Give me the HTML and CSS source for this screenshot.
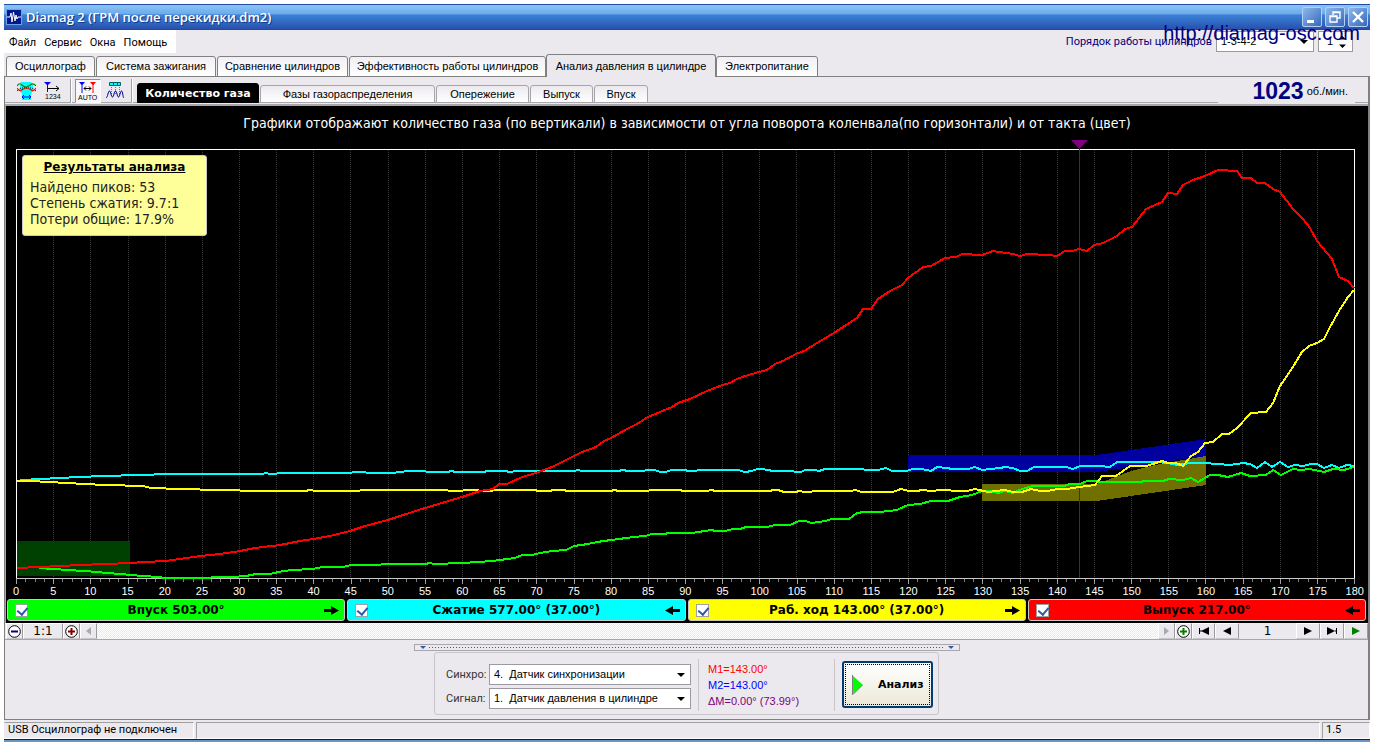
FILE: index.html
```html
<!DOCTYPE html>
<html lang="ru">
<head>
<meta charset="utf-8">
<title>Diamag 2</title>
<link rel="stylesheet" href="styles.css">
</head>
<body>
<div class="window">
  <header class="titlebar">
    <svg class="app-icon" width="16" height="16" viewBox="0 0 16 16"><rect width="16" height="16" fill="#001a8c"/><rect x=".5" y=".5" width="15" height="15" fill="none" stroke="#6fa0e8"/><path d="M1 8h3l1-4 1 9 1.500-10 1.500 9 1-6 1 4 1-2h3" fill="none" stroke="#fff" stroke-width="1"/></svg>
    <h1 class="title">Diamag 2 (ГРМ после перекидки.dm2)</h1>
    <div class="window-buttons">
      <button class="winbtn" aria-label="Свернуть"><svg width="18" height="18" viewBox="0 0 18 18"><path d="M4 12h7v3H4z" fill="#fff"/></svg></button>
      <button class="winbtn" aria-label="Восстановить"><svg width="18" height="18" viewBox="0 0 18 18"><path d="M7 7V4h7v6h-3M7 4.500h7" fill="none" stroke="#fff" stroke-width="1.400"/><path d="M4 8h7v6H4zM4 8.500h7" fill="none" stroke="#fff" stroke-width="1.400"/></svg></button>
      <button class="winbtn" aria-label="Закрыть"><svg width="18" height="18" viewBox="0 0 18 18"><path d="M4 4l10 10M14 4L4 14" stroke="#fff" stroke-width="2.400"/></svg></button>
    </div>
  </header>

  <div class="menu-row">
    <nav class="menu"><button>Файл</button><button>Сервис</button><button>Окна</button><button>Помощь</button></nav>
    <div class="order">
      <label for="order">Порядок работы цилиндров</label>
      <span class="combo order-combo"><select id="order"><option>1-3-4-2</option></select></span>
      <span class="spin"><input type="text" value="1" aria-label="Цилиндр"><svg width="7" height="12" viewBox="0 0 7 12"><path d="M0 3.500L3.500 0 7 3.500zM0 8.500h7L3.500 12z"/></svg></span>
    </div>
    <a class="site" href="#">http://diamag-osc.com</a>
  </div>

  <nav class="tabs">
    <button class="tab t1">Осциллограф</button>
    <button class="tab t2">Система зажигания</button>
    <button class="tab t3">Сравнение цилиндров</button>
    <button class="tab t4">Эффективность работы цилиндров</button>
    <button class="tab t5 active">Анализ давления в цилиндре</button>
    <button class="tab t6">Электропитание</button>
  </nav>

  <main class="page">
    <div class="toolbar">
      <button class="tool" aria-label="Фазы"><svg width="19" height="18" viewBox="0 0 19 18"><path d="M4 0h10l2 3v6l-2 3v6H5v-6L3 9V3z" fill="#0ff"/><path d="M0 4c4-6 5 2 9.500 1S15-1 19 4" fill="none" stroke="#008000" stroke-width="1.200"/><path d="M0 9l4-3h11l4 3" fill="none" stroke="#000" stroke-dasharray="1 1"/><path d="M0 6c4 6 5 0 9.500 0S15 12 19 6" fill="none" stroke="red" stroke-width="1.200"/><path d="M5 15h9M7 13l-2 2 2 2M12 13l2 2-2 2" fill="none" stroke="#00f"/></svg></button>
      <button class="tool" aria-label="Нумерация"><svg width="20" height="18" viewBox="0 0 20 18"><path d="M0 0h7L4 3v7H3V3z" fill="#00f"/><path d="M4 6.500h11M12 4l3 2.500L12 9" fill="none" stroke="#000"/><text x="1" y="17" class="tiny">1234</text></svg></button>
      <i class="sep"></i>
      <button class="tool pressed" aria-label="Авто"><svg width="22" height="20" viewBox="0 0 22 20"><path d="M2 1h6L5.500 4v8h-1V4z" fill="#00f"/><path d="M13 1h6l-2.500 3v8h-1V4z" fill="red"/><path d="M7 7.500h7M9 5.500l-2 2 2 2M12 5.500l2 2-2 2" fill="none" stroke="#000"/><text x="1" y="19" class="tiny">AUTO</text></svg></button>
      <button class="tool" aria-label="Пики"><svg width="18" height="18" viewBox="0 0 18 18"><path d="M3.500.5h11v3h-11zM7.500 0v4M11.500 0v4" fill="#0ff" stroke="#006060"/><path d="M5.500 5v8M9.500 5v8M13.500 5v8" stroke="#777" stroke-dasharray="1 1"/><path d="M0 16c2-1 2-7 3.500-7s1.500 6 3 6 1.500-6 3-6 1.500 6 3 6 1.500-6 3-6 1 6 2.500 7" fill="none" stroke="#00008b"/></svg></button>
      <i class="sep sep-end"></i>
      <nav class="subtabs">
        <button class="sub s1 active">Количество газа</button>
        <button class="sub s2">Фазы газораспределения</button>
        <button class="sub s3">Опережение</button>
        <button class="sub s4">Выпуск</button>
        <button class="sub s5">Впуск</button>
      </nav>
      <div class="rpm"><strong>1023</strong><span>об./мин.</span></div>
    </div>

    <section class="chart">
      <p class="caption">Графики отображают количество газа (по вертикали) в зависимости от угла поворота коленвала(по горизонтали) и от такта (цвет)</p>
      <div class="plot">
        <svg class="curves" viewBox="16 140 1339 444" preserveAspectRatio="none">
          <path d="M1071 140h17l-8.500 9z" fill="#800080"/>
          <path class="grid" d="M53.500 150v428M90.500 150v428M128.500 150v428M165.500 150v428M202.500 150v428M239.500 150v428M276.500 150v428M313.500 150v428M350.500 150v428M388.500 150v428M425.500 150v428M462.500 150v428M499.500 150v428M536.500 150v428M574.500 150v428M611.500 150v428M648.500 150v428M685.500 150v428M722.500 150v428M759.500 150v428M796.500 150v428M834.500 150v428M871.500 150v428M908.500 150v428M945.500 150v428M982.500 150v428M1020.500 150v428M1057.500 150v428M1094.500 150v428M1131.500 150v428M1168.500 150v428M1205.500 150v428M1242.500 150v428M1280.500 150v428M1317.500 150v428"/>
          <g shape-rendering="crispEdges">
            <rect x="17" y="541" width="113" height="35" fill="#004000"/>
            <path d="M908 455h189l109-16v17l-109 16H908z" fill="#0000a0"/>
            <path d="M982 484h115l34-13 24-6 51-9v29l-109 16H982z" fill="#707000"/>
            <path d="M16 149.500h1339M16.500 149v430M1354.500 149v430" fill="none" stroke="#fff"/>
            <path d="M16 578.500h1339" stroke="#c8c8c8"/>
            <path d="M16 580.500h1339" stroke="#808080" stroke-width="3" stroke-dasharray="1 8.292"/>
            <path d="M16 581.500h1339" stroke="#a0a0a0" stroke-width="5" stroke-dasharray="1 36.167"/>
            <path d="M1079.500 149v429" stroke="#800080"/>
          </g>
          <g class="series">
            <polyline stroke="#0ff" points="17,481 24,480 39,479 62,478 76,477 106,476 136,475 173,474 262,474 266,473 270,474 285,473 351,473 353,472 365,472 367,473 395,473 397,472 411,471 425,471 427,472 448,472 451,471 456,472 484,472 487,471 506,471 509,472 517,471 574,471 578,470 582,471 618,471 623,470 628,471 644,471 646,470 655,470 660,472 666,472 671,470 685,470 688,471 696,471 698,470 738,470 745,472 752,471 757,469 763,469 767,470 774,471 792,471 796,472 801,472 805,470 815,470 819,471 825,469 862,469 866,470 878,470 886,468 892,471 906,471 913,469 922,469 931,471 937,467 946,468 953,469 968,469 975,467 982,470 1000,468 1005,467 1013,468 1020,471 1027,471 1034,467 1066,467 1073,469 1080,466 1100,466 1110,467 1117,462 1155,462 1168,463 1177,465 1190,463 1205,463 1230,465 1243,463 1250,464 1257,468 1265,462 1272,467 1280,462 1288,467 1295,465 1303,466 1311,464 1317,464 1324,468 1332,465 1339,468 1347,465 1354,466"/>
            <polyline stroke="#0f0" points="39,568 53,569 68,570 83,571 98,572 106,573 121,574 130,575 143,576 158,577 165,578 210,578 212,577 233,577 246,576 256,574 270,574 283,571 293,570 312,569 323,567 343,567 351,565 380,565 382,564 425,564 430,563 434,564 447,564 449,563 462,563 478,562 492,561 515,558 522,555 532,555 540,553 552,551 566,550 574,546 588,544 597,542 611,540 634,537 645,536 652,534 665,534 668,533 692,533 711,530 716,531 725,531 733,529 740,529 746,527 767,527 775,525 790,525 799,521 805,521 812,523 825,521 832,519 849,519 857,513 864,512 880,512 897,510 908,505 920,504 931,501 948,501 960,497 972,495 982,491 990,491 998,493 1005,491 1013,493 1022,489 1033,486 1064,486 1070,484 1080,484 1087,481 1095,481 1100,482 1141,482 1144,481 1163,481 1169,479 1183,480 1191,478 1198,482 1210,475 1218,475 1228,477 1241,473 1250,476 1266,475 1273,470 1281,475 1293,469 1301,470 1310,469 1324,472 1333,469 1344,470 1354,467"/>
            <polyline stroke="#ff0" points="17,481 32,481 47,482 68,483 83,484 106,485 143,486 151,488 181,489 218,490 262,491 305,491 310,490 316,491 358,491 362,490 447,490 449,491 462,491 464,490 477,490 480,491 492,491 494,490 535,490 538,491 550,491 553,490 564,490 567,491 611,491 614,490 619,491 648,491 650,490 680,490 683,491 707,491 711,490 716,491 770,491 773,490 778,490 784,492 796,492 799,491 805,492 820,491 851,491 855,490 862,492 893,492 901,489 909,491 916,491 923,490 931,491 942,490 960,491 967,491 975,489 988,492 996,491 1005,490 1013,492 1022,492 1031,489 1040,491 1048,491 1057,489 1067,489 1079,487 1095,485 1102,476 1116,476 1130,466 1146,466 1153,464 1162,461 1168,463 1176,463 1183,466 1191,456 1198,452 1205,443 1213,442 1222,434 1229,434 1237,428 1251,413 1266,412 1273,403 1280,386 1291,370 1302,352 1309,346 1317,343 1324,339 1330,327 1339,311 1348,297 1354,290"/>
            <polyline stroke="red" points="17,568 39,567 62,566 78,565 106,564 130,563 145,562 165,561 180,559 200,556 220,554 240,551 255,548 280,545 300,541 313,539 330,536 350,531 365,526 388,520 400,516 425,508 462,497 480,491 493,489 499,484 507,484 522,477 536,473 552,467 574,456 582,452 596,447 604,441 611,438 627,429 637,424 648,417 672,407 678,403 690,399 707,391 715,388 722,385 730,383 737,379 745,376 759,372 767,370 775,364 783,361 796,354 804,351 817,343 834,333 843,327 857,318 863,309 871,309 878,299 890,291 902,285 908,278 923,267 931,266 945,258 956,257 962,254 982,255 993,251 1013,254 1020,256 1027,254 1048,255 1057,256 1065,251 1072,251 1079,249 1087,251 1094,245 1103,243 1117,236 1125,229 1132,227 1146,209 1162,202 1168,193 1177,194 1183,185 1193,180 1205,176 1218,170 1237,171 1242,178 1251,178 1257,183 1265,183 1273,189 1280,192 1293,209 1303,219 1310,228 1317,241 1332,259 1339,277 1348,281 1354,288"/>
          </g>
        </svg>
        <aside class="results">
          <h2>Результаты анализа</h2>
          <p>Найдено пиков: 53</p>
          <p>Степень сжатия: 9.7:1</p>
          <p>Потери общие: 17.9%</p>
        </aside>
      </div>
      <div class="axis"><span>0</span><span>5</span><span>10</span><span>15</span><span>20</span><span>25</span><span>30</span><span>35</span><span>40</span><span>45</span><span>50</span><span>55</span><span>60</span><span>65</span><span>70</span><span>75</span><span>80</span><span>85</span><span>90</span><span>95</span><span>100</span><span>105</span><span>110</span><span>115</span><span>120</span><span>125</span><span>130</span><span>135</span><span>140</span><span>145</span><span>150</span><span>155</span><span>160</span><span>165</span><span>170</span><span>175</span><span>180</span></div>
      <div class="legend">
        <label class="stroke-item green"><input type="checkbox" checked><span>Впуск 503.00°</span><svg width="15" height="9" viewBox="0 0 15 9"><path d="M0 3h7V0l8 4.500L7 9V6H0z"/></svg></label>
        <label class="stroke-item cyan"><input type="checkbox" checked><span>Сжатие 577.00° (37.00°)</span><svg width="15" height="9" viewBox="0 0 15 9"><path d="M15 3H8V0L0 4.500 8 9V6h7z"/></svg></label>
        <label class="stroke-item yellow"><input type="checkbox" checked><span>Раб. ход 143.00° (37.00°)</span><svg width="15" height="9" viewBox="0 0 15 9"><path d="M0 3h7V0l8 4.500L7 9V6H0z"/></svg></label>
        <label class="stroke-item red"><input type="checkbox" checked><span>Выпуск 217.00°</span><svg width="15" height="9" viewBox="0 0 15 9"><path d="M15 3H8V0L0 4.500 8 9V6h7z"/></svg></label>
      </div>
    </section>

    <div class="scroller">
      <button class="sb w17" aria-label="Уменьшить"><svg width="13" height="13" viewBox="0 0 13 13"><circle cx="6.500" cy="6.500" r="5.800" fill="#fff" stroke="#000"/><path d="M3 6.500h7" stroke="#000080" stroke-width="2"/></svg></button>
      <button class="sb w39">1:1</button>
      <button class="sb w17" aria-label="Увеличить"><svg width="13" height="13" viewBox="0 0 13 13"><circle cx="6.500" cy="6.500" r="5.800" fill="#fff" stroke="#000"/><path d="M3 6.500h7M6.500 3v7" stroke="#800000" stroke-width="2"/></svg></button>
      <button class="sb w17" aria-label="Влево"><svg width="5" height="8" viewBox="0 0 5 8"><path d="M5 0v8L0 4z" fill="#aaa"/></svg></button>
      <div class="track"></div>
      <button class="sb w17" aria-label="Вправо"><svg width="5" height="8" viewBox="0 0 5 8"><path d="M0 0v8l5-4z" fill="#aaa"/></svg></button>
      <button class="sb w17" aria-label="Добавить"><svg width="13" height="13" viewBox="0 0 13 13"><circle cx="6.500" cy="6.500" r="5.800" fill="#fff" stroke="#000"/><path d="M3 6.500h7M6.500 3v7" stroke="#008000" stroke-width="2"/></svg></button>
      <button class="sb w23" aria-label="В начало"><svg width="10" height="8" viewBox="0 0 10 8"><path d="M0 1h1v6H0zM1 3.500h2v1H1zM10 0v8L2 4z"/></svg></button>
      <button class="sb w24" aria-label="Назад"><svg width="8" height="8" viewBox="0 0 8 8"><path d="M8 0v8L0 4z"/></svg></button>
      <output class="pageno">1</output>
      <button class="sb w24" aria-label="Вперёд"><svg width="8" height="8" viewBox="0 0 8 8"><path d="M0 0v8l8-4z"/></svg></button>
      <button class="sb w24" aria-label="В конец"><svg width="10" height="8" viewBox="0 0 10 8"><path d="M9 1h1v6H9zM7 3.500h2v1H7zM0 0v8l8-4z"/></svg></button>
      <button class="sb w24" aria-label="Пуск"><svg width="8" height="8" viewBox="0 0 8 8"><path d="M0 0v8l8-4z" fill="#008000"/></svg></button>
    </div>

    <section class="bottom">
      <div class="splitter"><i></i><b></b><i></i></div>
      <div class="controls">
        <div class="sources">
          <label for="sync">Синхро:</label>
          <span class="combo"><select id="sync"><option>4.&nbsp; Датчик синхронизации</option></select></span>
          <label for="signal">Сигнал:</label>
          <span class="combo"><select id="signal"><option>1.&nbsp; Датчик давления в цилиндре</option></select></span>
        </div>
        <div class="marks">
          <p class="m1">M1=143.00°</p>
          <p class="m2">M2=143.00°</p>
          <p class="dm">ΔM=0.00° (73.99°)</p>
        </div>
        <button class="analyse"><svg width="11" height="20" viewBox="0 0 11 20"><path d="M0 0v20l11-10z" fill="#0f0"/><path d="M.5 0v20M1 19.500L10.500 10" fill="none" stroke="#808080"/></svg><span>Анализ</span></button>
      </div>
    </section>
  </main>

  <footer class="status">
    <div class="cell device">USB Осциллограф не подключен</div>
    <div class="cell fill"></div>
    <div class="cell version">1.5</div>
  </footer>
</div>
</body>
</html>
```

FILE: styles.css
```css
* { box-sizing: border-box; }
body {
  margin: 0;
  padding: 4px 4px 0;
  background: #fff;
  color: #000;
  font: 11px/13px "Liberation Sans", Arial, sans-serif;
}
h1, h2, p { margin: 0; }
svg { display: block; flex: none; }
button, select, input { font: inherit; color: inherit; padding: 0; margin: 0; border: 0; background: none; border-radius: 0; }
.window {
  display: flex;
  flex-direction: column;
  min-height: calc(100vh - 4px);
  background: #ebe9ed;
  border-bottom: 3px solid #6a96c4;
}

.titlebar {
  display: flex;
  align-items: center;
  height: 26px;
  padding: 0 2px 0 2px;
  gap: 4px;
  border: 1px solid #2448a8;
  border-width: 1px 0;
  background: linear-gradient(#8cc4f4 0, #6cacec 36%, #3c80d4 42%, #3474cc 60%, #2850ac 100%);
}
.title {
  flex: 1;
  font: 600 13px/20px "Open Sans", sans-serif;
  color: #fff;
  text-shadow: 1px 1px 0 #123a8a;
}
.window-buttons { display: flex; gap: 3px; }
.winbtn {
  width: 20px;
  height: 20px;
  border: 1px solid #b4d0f4;
  border-radius: 2px;
  background: linear-gradient(135deg, #8cb8ec, #3868bc);
}

.menu-row {
  position: relative;
  display: flex;
  justify-content: space-between;
  height: 23px;
}
.menu {
  display: flex;
  gap: 8px;
  padding: 1px 9px 0 5px;
  background: #fff;
  font-family: Roboto, sans-serif;
}
.order {
  display: flex;
  align-items: center;
  gap: 4px;
  padding-right: 17px;
  color: #000080;
}
.order label { font-family: Roboto, sans-serif; }
.combo { position: relative; display: block; color: #000; }
.combo::after {
  content: "";
  position: absolute;
  right: 6px;
  top: 9px;
  border: 4px solid transparent;
  border-top-color: #000;
  border-bottom: 0;
  pointer-events: none;
}
.combo select {
  appearance: none;
  display: block;
  width: 100%;
  height: 21px;
  padding: 0 16px 0 4px;
  border: 1px solid #9c9aa0;
  background: #fff;
}
.order-combo { width: 98px; }
.spin {
  display: flex;
  align-items: center;
  width: 35px;
  height: 21px;
  padding: 0 6px 0 8px;
  border: 1px solid #9c9aa0;
  background: #fff;
  color: #000;
}
.spin input { flex: 1; width: 6px; min-width: 0; }
.site {
  position: absolute;
  right: 10px;
  top: -9px;
  font-size: 20px;
  line-height: 24px;
  color: #000080;
  text-decoration: none;
}

.tabs {
  display: flex;
  align-items: flex-end;
  gap: 1px;
  height: 24px;
  padding-left: 2px;
  box-shadow: inset 0 -1px #808080;
}
.tab {
  height: 21px;
  border: 1px solid #808080;
  border-radius: 3px 3px 0 0;
  background: linear-gradient(#f0eff2, #fff);
  white-space: nowrap;
}
.tab.active { height: 23px; border-bottom: 0; background: #ebe9ed; margin: 0 -1px; }
.t1 { min-width: 89px; }
.t2 { min-width: 120px; }
.t3 { min-width: 131px; }
.t4 { min-width: 197px; }
.t5 { min-width: 170px; }
.t6 { min-width: 102px; }

.page {
  flex: 1;
  display: flex;
  flex-direction: column;
  border: 1px solid #808080;
  border-width: 0 2px 1px 1px;
}
.toolbar {
  display: flex;
  align-items: flex-end;
  height: 26px;
  padding-left: 7px;
  background: linear-gradient(#a8a6aa, #a8a6aa) 0 100% / 100% 1px no-repeat;
}
.tool {
  display: flex;
  align-items: center;
  justify-content: center;
  width: 28px;
  height: 24px;
}
.tool.pressed {
  width: 26px;
  border: 1px solid;
  border-color: #909090 #fff #fff #909090;
  background: #f8f8fa;
}
.tiny { font: 7px "Liberation Sans", sans-serif; }
.sep { width: 2px; height: 24px; margin: 0 3px 0 2px; border-left: 1px solid #a0a0a0; border-right: 1px solid #fff; }
.sep-end { margin: 0 4px 0 2px; }
.subtabs { display: flex; flex: 1; align-items: flex-end; gap: 1px; }
.sub {
  height: 18px;
  border: 1px solid #a8a6aa;
  border-radius: 3px 3px 0 0;
  background: linear-gradient(#ebe9ed, #fff);
  white-space: nowrap;
}
.sub.active { height: 20px; background: #000; border-color: #000; color: #fff; font-family: "DejaVu Sans", sans-serif; font-weight: bold; }
.s1 { min-width: 122px; }
.s2 { min-width: 175px; }
.s3 { min-width: 93px; }
.s4 { min-width: 63px; }
.s5 { min-width: 54px; }
.rpm {
  display: flex;
  align-items: center;
  gap: 3px;
  height: 26px;
  padding: 2px 7px 0 34px;
  margin-right: 13px;
  background: #ebe9ed;
}
.rpm strong { font-size: 23px; line-height: 24px; color: #000080; }

.chart {
  display: flex;
  flex: 1;
  flex-direction: column;
  margin-top: 1px;
  border-left: 1px solid #a8a6aa;
  border-top: 2px solid #a8a6aa;
  background: #000;
  color: #fff;
}
.caption {
  padding: 9px 0 8px;
  text-align: center;
  font: 14px/17px "DejaVu Sans Condensed", Verdana, sans-serif;
}
.plot { position: relative; flex: 1; margin: 0 13px 0 10px; display: flex; }
.curves { width: 100%; height: auto; min-height: 200px; flex: 1; }
.grid { stroke: #383838; stroke-dasharray: 1 1; shape-rendering: crispEdges; }
.series { fill: none; stroke-width: 2; stroke-linejoin: round; shape-rendering: crispEdges; }
.results {
  position: absolute;
  left: 6px;
  top: 15px;
  width: 185px;
  height: 81px;
  padding: 3px 7px;
  border: 1px solid #c8c8c8;
  border-radius: 3px;
  background: #ff9;
  color: #222;
  font: 14px/16px "DejaVu Sans Condensed", Verdana, sans-serif;
}
.results h2 {
  margin-bottom: 4px;
  font-family: "DejaVu Sans", Verdana, sans-serif;
  font-size: 12px;
  line-height: 16px;
  text-align: center;
  text-decoration: underline;
  color: #000;
}
.axis {
  display: flex;
  justify-content: space-between;
  margin: 0 13px 0 10px;
  height: 15px;
}
.axis span { display: flex; justify-content: center; width: 0; line-height: 14px; }
.legend {
  display: grid;
  grid-template-columns: repeat(4, 1fr);
  gap: 2px;
  padding: 0 2px 2px 1px;
  color: #000;
}
.stroke-item {
  display: flex;
  align-items: center;
  height: 22px;
  padding: 0 5px 0 7px;
  border: 1px solid #c8c8c8;
  border-radius: 3px;
  font: bold 12px/16px "DejaVu Sans", Verdana, sans-serif;
}
.stroke-item span { flex: 1; text-align: center; }
.stroke-item input {
  appearance: none;
  position: relative;
  width: 13px;
  height: 13px;
  border: 1px solid #a0a0a0;
  background: #fff;
}
.stroke-item input:checked::after {
  content: "";
  position: absolute;
  left: 3px;
  top: 0;
  width: 5px;
  height: 8px;
  border: solid #3058a8;
  border-width: 0 2px 2px 0;
  transform: rotate(40deg);
}
.green { background: #0f0; }
.cyan { background: #0ff; }
.yellow { background: #ff0; }
.red { background: #f00; }

.scroller {
  display: flex;
  height: 17px;
  padding-left: 1px;
  border-bottom: 1px solid #a8a6aa;
}
.sb {
  display: flex;
  align-items: center;
  justify-content: center;
  border: 1px solid;
  border-color: #fff #9c9aa0 #c8c6ca #fff;
  background: #ebe9ed;
  font: 12px/15px "DejaVu Sans", sans-serif;
}
.w17 { width: 17px; }
.w23 { width: 23px; }
.w39 { width: 40px; }
.w24 { width: 24px; }
.pageno { width: 57px; text-align: center; font: 12px/16px "DejaVu Sans", sans-serif; }
.track { flex: 1; background: repeating-conic-gradient(#ebe9ed 0 25%, #fff 0 50%) 0 0 / 2px 2px; }

.bottom {
  display: flex;
  flex-direction: column;
  align-items: center;
  padding: 4px 0;
}
.splitter {
  display: flex;
  align-items: center;
  gap: 3px;
  width: 546px;
  height: 7px;
  padding: 0 5px;
  border: 1px solid #a8a6aa;
}
.splitter i { border: 3px solid transparent; border-top-color: #3058a8; border-bottom: 0; }
.splitter b { flex: 1; height: 1px; background: repeating-linear-gradient(90deg, #3058a8 0 1px, transparent 1px 3px); }
.controls {
  display: flex;
  align-items: center;
  width: 505px;
  height: 63px;
  margin-top: 1px;
  padding: 2px 5px 0 11px;
  border: 1px solid #c8c6ca;
  border-radius: 3px;
}
.sources {
  display: grid;
  grid-template-columns: 40px 202px;
  column-gap: 3px;
  row-gap: 3px;
  align-items: center;
  padding-top: 3px;
}
.sources label { font-family: Roboto, sans-serif; color: #333; }
.marks {
  width: 137px;
  margin: 0 7px;
  padding: 2px 0 2px 9px;
  border: 1px solid #c8c6ca;
  border-width: 0 1px;
  line-height: 16px;
}
.m1 { color: #f00; }
.m2 { color: #00f; }
.dm { color: #800080; }
.analyse {
  display: flex;
  flex: 1;
  align-items: center;
  gap: 15px;
  height: 47px;
  padding-left: 8px;
  border: 2px solid #003c74;
  border-radius: 3px;
  outline: 1px dotted #000;
  outline-offset: -4px;
  background: linear-gradient(#fff, #ece9d8);
  font: bold 11px/14px "DejaVu Sans", Verdana, sans-serif;
}

.status {
  display: grid;
  grid-template-columns: 190px 1fr 48px;
  gap: 2px;
  padding-top: 2px;
  border-bottom: 1px solid #102030;
  font-family: Roboto, sans-serif;
}
.cell {
  height: 17px;
  padding: 0 3px;
  border: 1px solid;
  border-color: #a0a0a0 #fff #fff #a0a0a0;
  line-height: 14px;
}
.device { border-left-color: transparent; }
```
